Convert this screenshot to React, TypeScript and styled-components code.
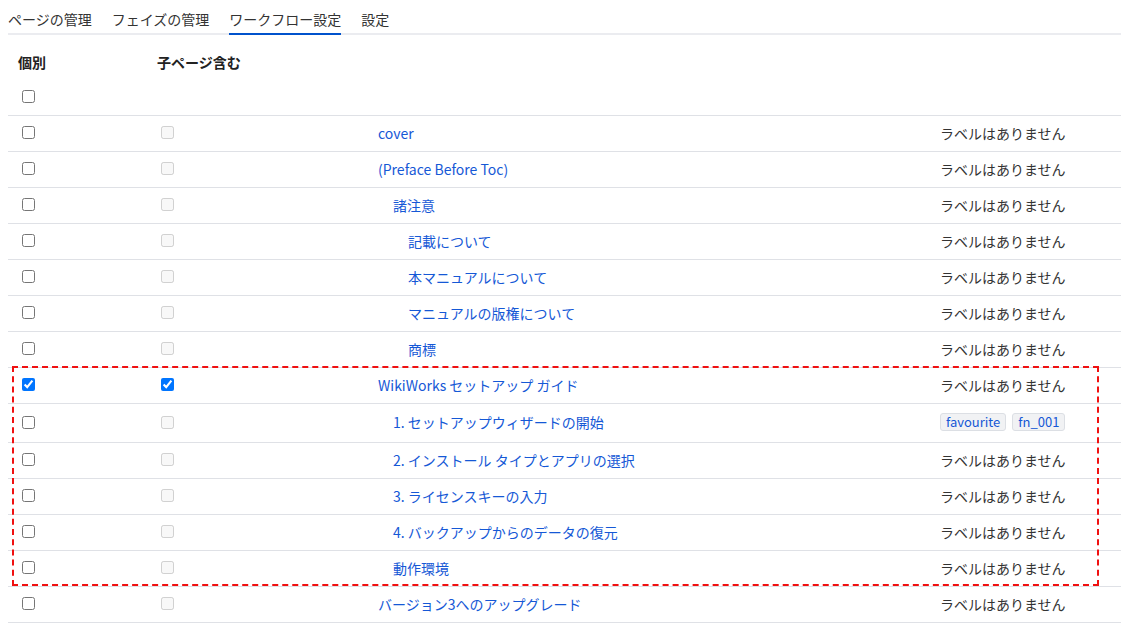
import React from 'react';
import styled, { createGlobalStyle } from 'styled-components';

const GlobalStyle = createGlobalStyle`
  body {
    margin: 0;
    background: #fff;
    font-family: "Noto Sans CJK JP", "Noto Sans", sans-serif;
    font-size: 14px;
    color: #333;
  }
`;

const Page = styled.div`
  padding-left: 8px;
  width: 1113px;
`;

const TabBar = styled.div`
  display: flex;
  gap: 20px;
  border-bottom: 2px solid #ebecf0;
`;

const Tab = styled.div<{ $active?: boolean }>`
  padding: 9px 0 4px;
  line-height: 20px;
  margin-bottom: -2px;
  border-bottom: 2px solid ${(p) => (p.$active ? '#0052cc' : 'transparent')};
  color: #333;
  white-space: nowrap;
`;

const COLS = '139px 221px 562px 1fr';

const Header = styled.div`
  padding-top: 10px;
  border-bottom: 1px solid #dfe1e6;
`;

const HeadRow = styled.div`
  display: grid;
  grid-template-columns: ${COLS};
  height: 36px;
  align-items: center;
`;

const HeadCell = styled.div`
  padding-left: 10px;
  padding-bottom: 2px;
  font-weight: 700;
  color: #222;
`;

const SelectRow = styled.div`
  display: grid;
  grid-template-columns: ${COLS};
  height: 34px;
  box-sizing: border-box;
  padding-bottom: 2px;
  align-items: center;
`;

const Row = styled.div<{ $tall?: boolean }>`
  display: grid;
  grid-template-columns: ${COLS};
  height: ${(p) => (p.$tall ? 39 : 36)}px;
  box-sizing: border-box;
  border-bottom: 1px solid #dfe1e6;
  align-items: center;
`;

const Cell = styled.div`
  padding-left: 10px;
  display: flex;
  align-items: center;
  white-space: nowrap;
`;

const TextCell = styled(Cell)`
  line-height: 20px;
  padding-bottom: 2px;
`;

const TitleLink = styled.a<{ $level: number }>`
  color: #1558d6;
  text-decoration: none;
  margin-left: ${(p) => p.$level * 15}px;
  cursor: pointer;
`;

const Check = styled.input`
  width: 13px;
  height: 13px;
  margin: 2px 3px 4px 4px;
`;

const Group = styled.div`
  position: relative;
  &::after {
    content: '';
    position: absolute;
    top: -2px;
    left: 4px;
    right: 22px;
    bottom: 1px;
    border: 2px dashed #f01010;
    pointer-events: none;
  }
`;

const Tags = styled.div`
  display: flex;
  gap: 6px;
`;

const Tag = styled.span`
  background: #f1f2f4;
  border: 1px solid #dcdfe4;
  border-radius: 3px;
  color: #1558d6;
  font-size: 13px;
  line-height: 16px;
  padding: 0 5px;
`;

const NoLabel = styled.span`
  color: #333;
`;

interface Page {
  title: string;
  level: number;
  checked?: boolean;
  tags?: string[];
}

const before: Page[] = [
  { title: 'cover', level: 0 },
  { title: '(Preface Before Toc)', level: 0 },
  { title: '諸注意', level: 1 },
  { title: '記載について', level: 2 },
  { title: '本マニュアルについて', level: 2 },
  { title: 'マニュアルの版権について', level: 2 },
  { title: '商標', level: 2 },
];

const group: Page[] = [
  { title: 'WikiWorks セットアップ ガイド', level: 0, checked: true },
  { title: '1. セットアップウィザードの開始', level: 1, tags: ['favourite', 'fn_001'] },
  { title: '2. インストール タイプとアプリの選択', level: 1 },
  { title: '3. ライセンスキーの入力', level: 1 },
  { title: '4. バックアップからのデータの復元', level: 1 },
  { title: '動作環境', level: 1 },
];

const after: Page[] = [{ title: 'バージョン3へのアップグレード', level: 0 }];

const PageRow: React.FC<{ page: Page }> = ({ page }) => (
  <Row $tall={!!page.tags}>
    <Cell>
      <Check type="checkbox" defaultChecked={page.checked} />
    </Cell>
    <Cell>
      <Check type="checkbox" checked={!!page.checked} disabled={!page.checked} readOnly />
    </Cell>
    <TextCell>
      <TitleLink $level={page.level}>{page.title}</TitleLink>
    </TextCell>
    <TextCell>
      {page.tags ? (
        <Tags>
          {page.tags.map((t) => (
            <Tag key={t}>{t}</Tag>
          ))}
        </Tags>
      ) : (
        <NoLabel>ラベルはありません</NoLabel>
      )}
    </TextCell>
  </Row>
);

export default function App() {
  return (
    <Page>
      <GlobalStyle />
      <TabBar>
        <Tab>ページの管理</Tab>
        <Tab>フェイズの管理</Tab>
        <Tab $active>ワークフロー設定</Tab>
        <Tab>設定</Tab>
      </TabBar>
      <Header>
        <HeadRow>
          <HeadCell>個別</HeadCell>
          <HeadCell>子ページ含む</HeadCell>
        </HeadRow>
        <SelectRow>
          <Cell>
            <Check type="checkbox" />
          </Cell>
        </SelectRow>
      </Header>
      {before.map((p) => (
        <PageRow key={p.title} page={p} />
      ))}
      <Group>
        {group.map((p) => (
          <PageRow key={p.title} page={p} />
        ))}
      </Group>
      {after.map((p) => (
        <PageRow key={p.title} page={p} />
      ))}
    </Page>
  );
}
